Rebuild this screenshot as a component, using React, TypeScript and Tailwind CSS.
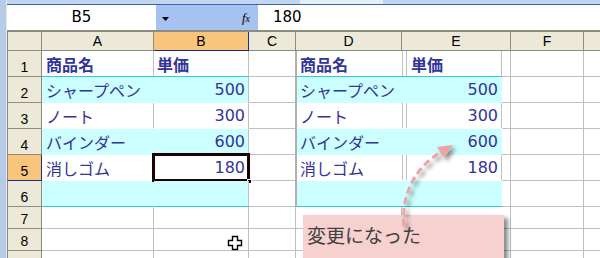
import React from "react";

type Row = {
  n: number;
  h: number;
  a?: string;
  b?: string;
  bold?: boolean;
  cyan?: boolean;
  teal?: boolean;
  table?: boolean;
  sel?: boolean;
  hideNum?: boolean;
};

const rows: Row[] = [
  { n: 1, h: 26, a: "商品名", b: "単価", bold: true, teal: true, table: true },
  { n: 2, h: 26, a: "シャープペン", b: "500", cyan: true, table: true },
  { n: 3, h: 26, a: "ノート", b: "300", table: true },
  { n: 4, h: 26, a: "バインダー", b: "600", cyan: true, table: true },
  { n: 5, h: 26, a: "消しゴム", b: "180", table: true, sel: true },
  { n: 6, h: 26, a: "", b: "", cyan: true, teal: true, table: true },
  { n: 7, h: 22 },
  { n: 8, h: 22 },
  { n: 9, h: 22, hideNum: true },
];

const jp = { fontFamily: '"Noto Sans CJK JP", sans-serif' };
const num = { fontFamily: '"DejaVu Sans", sans-serif' };

function bottomClass(r: Row) {
  if (r.teal) return "border-b-[#33cccc]";
  if (r.cyan) return "border-b-[#ccffff]";
  return "border-b-white";
}

function TextA({ r }: { r: Row }) {
  return (
    <span
      className={
        r.bold
          ? "font-bold text-[16px] text-[#333399] leading-none"
          : "text-[16px] text-[#333399] leading-none"
      }
      style={jp}
    >
      {r.a}
    </span>
  );
}

function TextB({ r }: { r: Row }) {
  if (r.bold)
    return (
      <span className="font-bold text-[16px] text-[#333399] leading-none" style={jp}>
        {r.b}
      </span>
    );
  return (
    <span className="text-[16px] text-[#333399] leading-none" style={num}>
      {r.b}
    </span>
  );
}

function SheetRow({ r }: { r: Row }) {
  const hClass = r.h === 26 ? "h-[26px]" : "h-[22px]";
  const rowHead = r.sel
    ? "w-[35px] shrink-0 flex items-end justify-center pb-[2px] bg-[#f9c47c] border-l border-l-[#8e8c7c] border-r border-r-[#1c2f8a] border-b border-b-[#1c2f8a]"
    : "w-[35px] shrink-0 flex items-end justify-center pb-[2px] bg-[#ece9d8] border-l border-r border-b border-[#8e8c7c]";
  let aCls = "w-[112px] shrink-0 flex items-center pl-[4px] border-r border-b border-[#c0c0c0]";
  let bCls = "w-[95px] shrink-0 flex items-center justify-end pr-[3px] border-r border-b border-[#c0c0c0] relative";
  if (r.table) {
    const bg = r.cyan ? "bg-[#ccffff]" : "bg-white";
    const ar = r.cyan ? "border-r-[#ccffff]" : "border-r-[#c0c0c0]";
    aCls = `w-[112px] shrink-0 flex items-center pl-[4px] border-r border-b ${bg} ${ar} ${bottomClass(r)}`;
    bCls = `w-[95px] shrink-0 flex items-center pr-[3px] border-r border-b border-r-[#c0c0c0] relative ${bg} ${bottomClass(r)} ${r.bold ? "justify-start pl-[3px]" : "justify-end"}`;
  }
  return (
    <div className={`flex shrink-0 ${hClass}`}>
      <div className={rowHead}>
        {r.hideNum ? null : <span className="text-[14px] leading-none text-black">{r.n}</span>}
      </div>
      <div className={aCls}>{r.a ? <TextA r={r} /> : null}</div>
      <div className={bCls}>
        {r.b ? <TextB r={r} /> : null}
        {r.sel ? (
          <>
            <div className="absolute left-[-2px] top-[-2px] w-[98px] h-[29px] border-[3px] border-[#1e0202]" />
            <div className="absolute right-[-4px] bottom-[-4px] w-[5px] h-[5px] bg-black border border-white" />
          </>
        ) : null}
      </div>
      <div className="w-[47px] shrink-0 border-r border-b border-[#c0c0c0]" />
      <div className="w-[106px] shrink-0 border-r border-b border-[#c0c0c0]" />
      <div className="w-[109px] shrink-0 border-r border-b border-[#c0c0c0]" />
      <div className="w-[73px] shrink-0 border-r border-b border-[#c0c0c0]" />
      <div className="flex-1 border-b border-[#c0c0c0]" />
    </div>
  );
}

function PictureRow({ r }: { r: Row }) {
  const bg = r.cyan ? "bg-[#ccffff]" : "bg-white";
  const b = bottomClass(r);
  return (
    <div className={`flex h-[26px] border-b ${bg} ${b}`}>
      <div className="w-[105px] shrink-0 flex items-center pl-[3px]">
        {r.a ? <TextA r={r} /> : null}
      </div>
      <div
        className={
          r.cyan
            ? "w-[5px] shrink-0"
            : "w-[5px] shrink-0 border-l border-r border-[#c0c0c0]"
        }
      />
      <div
        className={
          r.cyan
            ? `w-[95px] shrink-0 flex items-center ${r.bold ? "justify-start pl-[4px]" : "justify-end pr-[4px]"}`
            : `w-[95px] shrink-0 flex items-center border-r border-[#c0c0c0] ${r.bold ? "justify-start pl-[4px]" : "justify-end pr-[3px]"}`
        }
      >
        {r.b ? <TextB r={r} /> : null}
      </div>
    </div>
  );
}

export default function App() {
  const tableRows = rows.filter((r) => r.table);
  return (
    <div
      className="relative w-[600px] h-[258px] overflow-hidden bg-white flex"
      style={{ fontFamily: '"Liberation Sans", "Noto Sans CJK JP", sans-serif' }}
    >
      {/* window frame left */}
      <div className="w-[6px] shrink-0 bg-[#b7cbe7]" />
      <div className="w-[1px] shrink-0 bg-[#dce7f5]" />
      <div className="flex-1 flex flex-col min-w-0">
        {/* top strip */}
        <div className="h-[5px] shrink-0 bg-[#c3d6ef] border-b border-[#3a64a8] flex">
          <div className="w-[293px]" />
          <div className="w-[83px] bg-[#e6eef9]" />
        </div>
        {/* formula bar */}
        <div className="h-[27px] shrink-0 flex items-center bg-white border-b-2 border-[#8e8c7c]">
          <div className="w-[149px] h-full flex items-center justify-center">
            <span className="text-[15px] text-black" style={num}>
              B5
            </span>
          </div>
          <div className="w-[102px] h-full bg-[#a5c2f0] flex items-center justify-between pl-[6px] pr-[8px]">
            <svg width="7" height="4" viewBox="0 0 7 4" className="mt-[2px]">
              <path d="M0 0 L7 0 L3.5 4 Z" fill="#000" />
            </svg>
            <span className="italic text-[13px] text-black leading-none" style={{ fontFamily: '"Liberation Serif", serif' }}>
              <i>f</i>
              <span className="text-[10px]">x</span>
            </span>
          </div>
          <div className="flex-1 pl-[15px] flex items-center">
            <span className="text-[15px] text-black" style={num}>
              180
            </span>
          </div>
        </div>
        {/* column headers */}
        <div className="flex shrink-0 h-[19px] bg-[#ece9d8]">
          <div className="w-[35px] shrink-0 border-l border-r border-b border-[#8e8c7c]" />
          <div className="w-[112px] shrink-0 flex items-center justify-center border-r border-b border-[#8e8c7c] text-[14px] leading-none text-black">
            A
          </div>
          <div className="w-[95px] shrink-0 flex items-center justify-center bg-[#f9c47c] border-r border-b border-[#1c2f8a] text-[14px] leading-none text-black">
            B
          </div>
          <div className="w-[47px] shrink-0 flex items-center justify-center border-r border-b border-[#8e8c7c] text-[14px] leading-none text-black">
            C
          </div>
          <div className="w-[106px] shrink-0 flex items-center justify-center border-r border-b border-[#8e8c7c] text-[14px] leading-none text-black">
            D
          </div>
          <div className="w-[109px] shrink-0 flex items-center justify-center border-r border-b border-[#8e8c7c] text-[14px] leading-none text-black">
            E
          </div>
          <div className="w-[73px] shrink-0 flex items-center justify-center border-r border-b border-[#8e8c7c] text-[14px] leading-none text-black">
            F
          </div>
          <div className="flex-1 border-b border-[#8e8c7c]" />
        </div>
        {/* rows */}
        {rows.map((r) => (
          <SheetRow key={r.n} r={r} />
        ))}
      </div>

      {/* pasted picture of the table */}
      <div className="absolute left-[295px] top-[51px] w-[207px] border-l-2 border-[#b0b0b0]">
        {tableRows.map((r) => (
          <PictureRow key={r.n} r={r} />
        ))}
      </div>

      {/* callout */}
      <div className="absolute left-[303px] top-[215px] w-[201px] h-[50px] bg-[#f7d0d0] shadow-[4px_3px_4px_rgba(0,0,0,0.45)] pl-[4px] pt-[8px]">
        <span className="text-[19px] leading-[24px] text-[#404040]" style={jp}>
          変更になった
        </span>
      </div>

      {/* dashed arrow */}
      <svg className="absolute left-0 top-0 pointer-events-none" width="600" height="258" viewBox="0 0 600 258">
        <defs>
          <filter id="sh" x="-50%" y="-50%" width="200%" height="200%">
            <feDropShadow dx="3" dy="3" stdDeviation="2" floodColor="#000" floodOpacity="0.45" />
          </filter>
        </defs>
        <g filter="url(#sh)">
          <path
            d="M404 226 C401 196, 414 168, 441 152"
            fill="none"
            stroke="#f0a2a6"
            strokeWidth="3"
            strokeDasharray="7 4"
          />
          <path d="M453 145 L444 158 L437 147 Z" fill="#f0a2a6" />
        </g>
      </svg>

      {/* mouse cursor */}
      <svg className="absolute left-[227px] top-[235px] pointer-events-none" width="17" height="17" viewBox="0 0 17 17">
        <path
          d="M5.5 1.5 H10.5 V5.5 H14.5 V10.5 H10.5 V14.5 H5.5 V10.5 H1.5 V5.5 H5.5 Z"
          fill="#fff"
          stroke="#000"
          strokeWidth="1.4"
        />
      </svg>
    </div>
  );
}
